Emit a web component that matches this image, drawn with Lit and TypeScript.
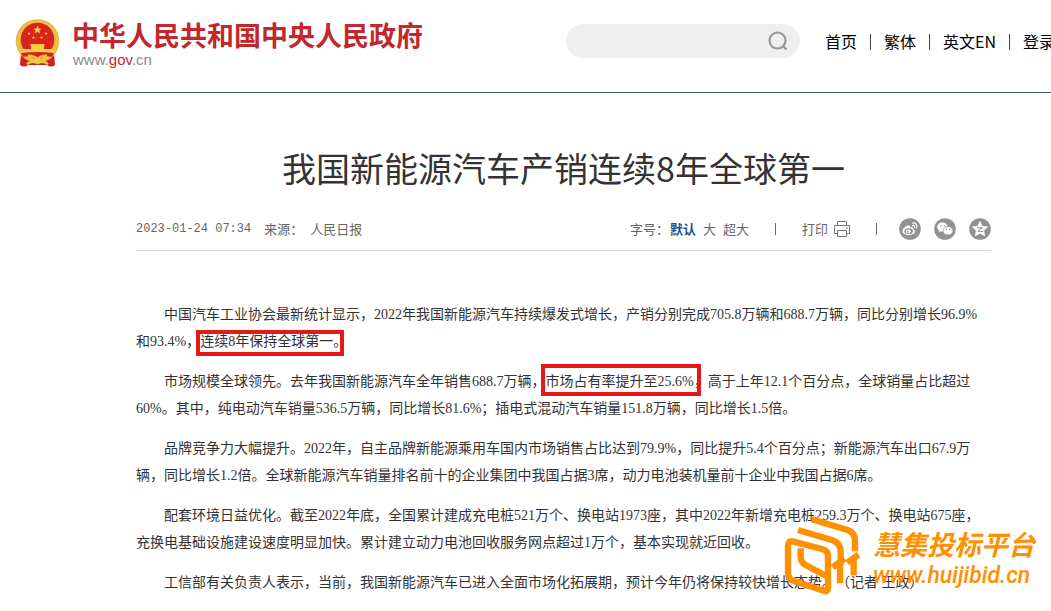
import { LitElement, html, css, svg } from "lit";
import { customElement, property, state } from "lit/decorators.js";

const star = (cx: number, cy: number, r: number) => {
  const pts: string[] = [];
  for (let i = 0; i < 10; i++) {
    const a = (Math.PI / 5) * i - Math.PI / 2;
    const q = i % 2 ? r * 0.42 : r;
    pts.push(`${(cx + q * Math.cos(a)).toFixed(2)},${(cy + q * Math.sin(a)).toFixed(2)}`);
  }
  return svg`<polygon points=${pts.join(" ")}></polygon>`;
};

@customElement("site-header")
class SiteHeader extends LitElement {
  static styles = css`
    :host {
      display: block;
      border-bottom: 1px solid #3f5871;
      overflow: hidden;
    }
    .bar {
      display: flex;
      align-items: flex-start;
      height: 92px;
      padding-left: 14px;
      box-sizing: border-box;
    }
    .brand {
      display: flex;
      gap: 11px;
      flex: 1 0 auto;
      padding-top: 18px;
      text-decoration: none;
    }
    .emblem {
      display: block;
      width: 47px;
      height: 50px;
    }
    .name {
      display: block;
      font: 700 27px/34px "Noto Sans CJK SC", sans-serif;
      color: #c3272b;
      white-space: nowrap;
    }
    .url {
      display: block;
      padding-left: 1px;
      font: 15px/16px "Liberation Sans", sans-serif;
      color: #8c8c8c;
    }
    .url b {
      font-weight: 400;
      color: #c3272b;
    }
    .search {
      display: flex;
      align-items: center;
      flex: 0 0 234px;
      min-width: 0;
      height: 34px;
      margin-top: 24px;
      border-radius: 17px;
      background: #efefef;
    }
    .search input {
      flex: 1;
      min-width: 0;
      height: 30px;
      margin-left: 16px;
      border: 0;
      outline: 0;
      background: transparent;
      font-size: 14px;
    }
    .search button {
      display: flex;
      padding: 0 12px 0 8px;
      border: 0;
      background: none;
      cursor: pointer;
    }
    nav {
      display: flex;
      flex: 0 0 251px;
      min-width: 0;
      gap: 9px;
      margin-top: 29px;
      padding-left: 25px;
      box-sizing: border-box;
      font: 400 16px/24px "Noto Sans CJK SC", sans-serif;
      color: #000;
      white-space: nowrap;
    }
    nav a {
      flex: none;
      color: inherit;
      text-decoration: none;
    }
    nav i {
      flex: none;
      align-self: center;
      width: 1px;
      height: 16px;
      margin: 2px 4px 0 4px;
      background: #444;
    }
  `;

  render() {
    return html`
      <header class="bar">
        <a class="brand" href="#">
          <svg class="emblem" viewBox="0 0 47 50" aria-hidden="true">
            <path d="M7 35 L6 47 Q10 50 14 47 L33 47 Q37 50 41 47 L40 35Z" fill="#cf2020"></path>
            <circle cx="23.500" cy="23" r="21.800" fill="#e9b93c"></circle>
            <circle cx="23.500" cy="23" r="19.500" fill="none" stroke="#f0cb58" stroke-width="1.600" stroke-dasharray="2 1.200"></circle>
            <circle cx="23.500" cy="21.500" r="16.800" fill="#da251c"></circle>
            <g fill="#f5cf45">
              ${star(23.5, 12, 4.4)} ${star(15, 15.5, 1.8)} ${star(32, 15.5, 1.8)}
              ${star(19.5, 19.5, 1.8)} ${star(27.5, 19.5, 1.8)}
              <path d="M17 26h13l1 2h-1v3h9v4H8v-4h9v-3h-1z"></path>
            </g>
            <path d="M7 35 Q23 33 40 35 L38 39 Q30 37 28 40 L23.500 42 L19 40 Q17 37 9 39Z" fill="#d8231d"></path>
            <path d="M14 38 Q19 37 23.500 41 Q28 37 33 38 M13 46 Q18 42 23.500 45 Q29 42 34 46" fill="none" stroke="#f0c544" stroke-width="2.600"></path>
            <circle cx="23.500" cy="43" r="3" fill="#f0c544"></circle>
          </svg>
          <span>
            <span class="name">中华人民共和国中央人民政府</span>
            <span class="url">www.<b>gov</b>.cn</span>
          </span>
        </a>
        <form class="search" role="search" @submit=${(e: Event) => e.preventDefault()}>
          <input type="text" aria-label="搜索" />
          <button type="submit" aria-label="搜索">
            <svg width="20" height="20" viewBox="0 0 20 20" fill="none" stroke="#999" stroke-width="2.200">
              <circle cx="9.500" cy="9.500" r="8"></circle>
              <path d="M14.500 14.500L18.500 18.500"></path>
            </svg>
          </button>
        </form>
        <nav>
          <a href="#">首页</a><i></i><a href="#">繁体</a><i></i><a href="#">英文EN</a><i></i><a href="#">登录</a>
        </nav>
      </header>
    `;
  }
}

@customElement("article-tools")
class ArticleTools extends LitElement {
  static styles = css`
    :host {
      display: flex;
      justify-content: space-between;
      align-items: center;
      height: 42px;
      border-bottom: 1px solid #d8d8d8;
      font: 400 13px/20px "Noto Sans CJK SC", sans-serif;
      color: #666;
      white-space: nowrap;
    }
    .source,
    .tools,
    .sizes,
    .share {
      display: flex;
      align-items: center;
    }
    .source {
      gap: 7px;
    }
    .source time {
      margin-right: 6px;
      font: 12px/20px "Liberation Mono", monospace;
    }
    .sizes {
      gap: 7px;
    }
    .sizes span {
      margin-right: -6px;
    }
    button {
      padding: 0;
      border: 0;
      background: none;
      font: inherit;
      color: inherit;
      cursor: pointer;
    }
    .sizes .on {
      font-weight: 700;
      color: #1d4f8c;
    }
    .rule {
      width: 1px;
      height: 12px;
      background: #666;
    }
    .sizes + .rule {
      margin: 0 26px;
    }
    .print {
      display: flex;
      align-items: center;
      gap: 5px;
      margin-right: 25px;
    }
    .share {
      gap: 13px;
      margin-left: 22px;
    }
    .share a,
    .share svg {
      display: block;
    }
  `;

  @state() private size = "默认";

  render() {
    return html`
      <div class="source">
        <time datetime="2023-01-24T07:34">2023-01-24 07:34</time>
        <span>来源：</span>
        <span>人民日报</span>
      </div>
      <div class="tools">
        <div class="sizes">
          <span>字号：</span>
          ${["默认", "大", "超大"].map(
            (s) => html`<button class=${s === this.size ? "on" : ""} @click=${() => (this.size = s)}>${s}</button>`
          )}
        </div>
        <span class="rule"></span>
        <button class="print">
          打印
          <svg width="18" height="16" viewBox="0 0 18 16" fill="none" stroke="#777">
            <path d="M4.500 4.500V.5h9v4M4 12.500H1.500V4.500h15v8H14M4.500 9.500h9v6h-9z"></path>
            <path d="M13 7h2"></path>
          </svg>
        </button>
        <span class="rule"></span>
        <div class="share">
          <a href="#" aria-label="微博">
            <svg width="22" height="22" viewBox="0 0 22 22">
              <circle cx="11" cy="11" r="10.800" fill="#929292"></circle>
              <path d="M9 7.500C6 8 3.500 11 3.500 13.200c0 5 12.500 4.800 12.500.2 0-1.300-1-1.800-1.700-2 .6-2-.9-2.600-3-1.700C11.500 8 10.700 7.200 9 7.500z" fill="#fff"></path>
              <ellipse cx="9.600" cy="13.200" rx="4.300" ry="2.900" fill="#929292"></ellipse>
              <ellipse cx="9.200" cy="13.400" rx="2.500" ry="2" fill="#fff"></ellipse>
              <circle cx="8.800" cy="13.700" r="1" fill="#929292"></circle>
              <path d="M13.500 5c3-.5 5 2 4.200 5M13.600 7.300c1.400-.2 2.300.8 2 2.200" fill="none" stroke="#fff" stroke-width="1.200" stroke-linecap="round"></path>
            </svg>
          </a>
          <a href="#" aria-label="微信">
            <svg width="22" height="22" viewBox="0 0 22 22">
              <circle cx="11" cy="11" r="10.800" fill="#929292"></circle>
              <path d="M8.500 4.500c-3 0-5.300 2-5.300 4.500 0 1.500.8 2.700 2 3.500l-.4 1.800 2-1.100c.6.200 1.100.2 1.700.2 3 0 5.300-2 5.300-4.500s-2.300-4.400-5.300-4.400z" fill="#fff"></path>
              <path d="M14 8.600c-2.800 0-5 1.800-5 4.100s2.200 4.100 5 4.100c.5 0 1-.1 1.500-.2l1.700 1-.4-1.600c1.300-.8 2.100-2 2.100-3.300 0-2.300-2.200-4.100-4.900-4.100z" fill="#fff" stroke="#929292" stroke-width=".7"></path>
              <g fill="#929292">
                <circle cx="6.800" cy="7.800" r=".8"></circle><circle cx="10.500" cy="7.800" r=".8"></circle>
                <circle cx="12.400" cy="11.600" r=".7"></circle><circle cx="15.700" cy="11.600" r=".7"></circle>
              </g>
            </svg>
          </a>
          <a href="#" aria-label="QQ空间">
            <svg width="22" height="22" viewBox="0 0 22 22">
              <circle cx="11" cy="11" r="10.800" fill="#929292"></circle>
              <path d="M11 3.500l2.200 4.800 5.300.6-3.900 3.600 1 5.200-4.600-2.500-4.600 2.500 1-5.200-3.900-3.600 5.300-.6z" fill="#fff" stroke="#fff" stroke-width=".8" stroke-linejoin="round"></path>
              <path d="M8 9.800h5.400L8.800 13.300q3 .6 5.400 0" fill="none" stroke="#929292" stroke-width="1"></path>
            </svg>
          </a>
        </div>
      </div>
    `;
  }
}

@customElement("site-watermark")
class SiteWatermark extends LitElement {
  static styles = css`
    :host {
      display: flex;
      gap: 9px;
      color: #ff9000;
      pointer-events: none;
    }
    svg {
      display: block;
      width: 84px;
      height: 84px;
    }
    .cn {
      display: block;
      margin-top: 10px;
      font: italic 700 27px/40px "Noto Sans CJK SC", sans-serif;
      white-space: nowrap;
    }
    .web {
      display: block;
      font: italic 500 23px/24px Roboto, sans-serif;
    }
  `;

  render() {
    return html`
      <svg viewBox="0 0 252 252" fill="none" stroke="currentColor" stroke-width="19" aria-hidden="true">
        <path d="M24 96V176Q24 196 42 201L134 231Q144 234 144 222V126Q144 110 126 105L38 82Q24 79 24 96Z"></path>
        <path d="M62 103V128Q62 145 78 154L139 186"></path>
        <path d="M54 48L158 79Q182 88 182 114V142M158 160L194 134M180 148V208"></path>
        <path d="M95 16L203 48Q225 56 225 80V112M202 146L236 122M221 130V184"></path>
      </svg>
      <div>
        <span class="cn">慧集投标平台</span>
        <span class="web">www.huijibid.cn</span>
      </div>
    `;
  }
}

type Run = string | { mark: string; tall?: boolean };

@customElement("article-body")
class ArticleBody extends LitElement {
  static styles = css`
    :host {
      display: block;
      padding: 50px 0 14px;
      font: 400 14px/27px "Liberation Serif", "Noto Sans CJK SC", sans-serif;
      color: #333;
      text-spacing-trim: space-all;
    }
    p {
      margin: 0 0 13px;
      text-indent: 28px;
    }
    p:last-child {
      margin: 0;
    }
    .mark {
      position: relative;
      white-space: nowrap;
    }
    .mark::after {
      content: "";
      position: absolute;
      inset: -4px 3px -7px -4px;
      border: 4px solid #e81818;
    }
    .mark.tall::after {
      inset: -10px -7px -7px -5px;
    }
  `;

  @property({ attribute: false }) paragraphs: Run[][] = [];

  render() {
    return this.paragraphs.map(
      (runs) =>
        html`<p>${runs.map((r) =>
          typeof r === "string" ? r : html`<span class=${r.tall ? "mark tall" : "mark"}>${r.mark}</span>`
        )}</p>`
    );
  }
}

const PARAGRAPHS: Run[][] = [
  [
    "中国汽车工业协会最新统计显示，2022年我国新能源汽车持续爆发式增长，产销分别完成705.8万辆和688.7万辆，同比分别增长96.9%和93.4%，",
    { mark: "连续8年保持全球第一。" },
  ],
  [
    "市场规模全球领先。去年我国新能源汽车全年销售688.7万辆，",
    { mark: "市场占有率提升至25.6%", tall: true },
    "，高于上年12.1个百分点，全球销量占比超过60%。其中，纯电动汽车销量536.5万辆，同比增长81.6%；插电式混动汽车销量151.8万辆，同比增长1.5倍。",
  ],
  [
    "品牌竞争力大幅提升。2022年，自主品牌新能源乘用车国内市场销售占比达到79.9%，同比提升5.4个百分点；新能源汽车出口67.9万辆，同比增长1.2倍。全球新能源汽车销量排名前十的企业集团中我国占据3席，动力电池装机量前十企业中我国占据6席。",
  ],
  [
    "配套环境日益优化。截至2022年底，全国累计建成充电桩521万个、换电站1973座，其中2022年新增充电桩259.3万个、换电站675座，充换电基础设施建设速度明显加快。累计建立动力电池回收服务网点超过1万个，基本实现就近回收。",
  ],
  [
    "工信部有关负责人表示，当前，我国新能源汽车已进入全面市场化拓展期，预计今年仍将保持较快增长态势。（记者 王政）",
  ],
];

@customElement("app-root")
class AppRoot extends LitElement {
  static styles = css`
    :host {
      display: block;
      position: relative;
      overflow: hidden;
      background: #fff;
    }
    main {
      margin: 0 60px 0 136px;
    }
    h1 {
      margin: 0;
      padding: 50px 0 15px;
      font: 400 34px/50px "Noto Sans CJK SC", sans-serif;
      color: #333;
      text-align: center;
    }
    site-watermark {
      position: absolute;
      top: 514px;
      right: 16px;
    }
  `;

  render() {
    return html`
      <site-header></site-header>
      <main>
        <h1>我国新能源汽车产销连续8年全球第一</h1>
        <article-tools></article-tools>
        <article-body .paragraphs=${PARAGRAPHS}></article-body>
      </main>
      <site-watermark></site-watermark>
    `;
  }
}
